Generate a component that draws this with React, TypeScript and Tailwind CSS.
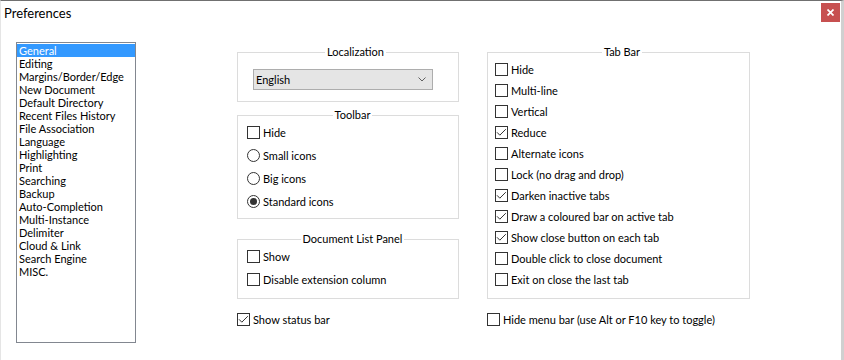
import React from "react";

const pages = [
  "General",
  "Editing",
  "Margins/Border/Edge",
  "New Document",
  "Default Directory",
  "Recent Files History",
  "File Association",
  "Language",
  "Highlighting",
  "Print",
  "Searching",
  "Backup",
  "Auto-Completion",
  "Multi-Instance",
  "Delimiter",
  "Cloud & Link",
  "Search Engine",
  "MISC.",
];

const tabBar: [string, boolean][] = [
  ["Hide", false],
  ["Multi-line", false],
  ["Vertical", false],
  ["Reduce", true],
  ["Alternate icons", false],
  ["Lock (no drag and drop)", false],
  ["Darken inactive tabs", true],
  ["Draw a coloured bar on active tab", true],
  ["Show close button on each tab", true],
  ["Double click to close document", false],
  ["Exit on close the last tab", false],
];

function Box({ checked }: { checked?: boolean }) {
  return (
    <span className="flex h-[13px] w-[13px] shrink-0 items-center justify-center border border-[#333333] bg-white">
      {checked && (
        <svg width="11" height="11" viewBox="0 0 11 11">
          <path d="M1 5.3 L3.8 8.2 L9.8 2.2" fill="none" stroke="#333333" strokeWidth="1" />
        </svg>
      )}
    </span>
  );
}

function Radio({ checked }: { checked?: boolean }) {
  return (
    <span className="flex h-[13px] w-[13px] shrink-0 items-center justify-center rounded-full border border-[#333333] bg-white">
      {checked && <span className="h-[7px] w-[7px] rounded-full bg-[#333333]" />}
    </span>
  );
}

function Row({ label, checked, className }: { label: string; checked?: boolean; className: string }) {
  return (
    <div className={`flex items-center gap-[3px] whitespace-nowrap ${className}`}>
      <Box checked={checked} />
      <span>{label}</span>
    </div>
  );
}

function RadioRow({ label, checked }: { label: string; checked?: boolean }) {
  return (
    <div className="flex h-[23px] items-center gap-[3px]">
      <Radio checked={checked} />
      <span>{label}</span>
    </div>
  );
}

export default function App() {
  return (
    <div className="flex h-[360px] w-[844px] flex-col border-t border-l border-r-[3px] border-t-[#707070] border-l-[#e5e5e5] border-r-[#d0d0d0] bg-white font-['Lato',sans-serif] text-[11px] leading-[13px] text-black">
      {/* Title bar */}
      <div className="flex h-[41px] shrink-0 items-start justify-between">
        <span className="ml-[3px] mt-[3px] text-[13px] leading-[18px]">Preferences</span>
        <button className="mr-[1px] mt-[2px] flex h-[19px] w-[19px] items-center justify-center bg-[#c75050]">
          <svg width="7" height="7" viewBox="0 0 7 7">
            <path d="M0.5 0.5 L6.5 6.5 M6.5 0.5 L0.5 6.5" stroke="white" strokeWidth="1.7" />
          </svg>
        </button>
      </div>

      <div className="flex items-start">
        {/* Page list */}
        <div className="ml-[15px] h-[301px] w-[120px] shrink-0 border border-[#828790] pt-[1px]">
          {pages.map((p, i) => (
            <div key={p} className={i === 0 ? "bg-[#3399ff] pl-[2px] text-white" : "pl-[2px]"}>
              {p}
            </div>
          ))}
        </div>

        {/* Left column */}
        <div className="ml-[101px] mt-[4px] flex w-[222px] shrink-0 flex-col">
          <fieldset className="border border-[#dcdcdc] pb-[11px] pl-[15px] pt-[11px]">
            <legend className="mx-auto px-[2px] leading-[12px]">Localization</legend>
            <div className="flex h-[21px] w-[180px] items-center justify-between border border-[#adadad] bg-[#e5e5e5] pl-[2px] pr-[6px]">
              <span>English</span>
              <svg width="8" height="5" viewBox="0 0 8 5">
                <path d="M0.5 0.5 L4 4 L7.5 0.5" fill="none" stroke="#606060" strokeWidth="1" />
              </svg>
            </div>
          </fieldset>

          <fieldset className="mt-[7px] border border-[#dcdcdc] pb-[5px] pl-[9px]">
            <legend className="mx-auto px-[2px] leading-[12px]">Toolbar</legend>
            <Row label="Hide" className="h-[23px]" />
            <RadioRow label="Small icons" />
            <RadioRow label="Big icons" />
            <RadioRow label="Standard icons" checked />
          </fieldset>

          <fieldset className="mt-[14px] border border-[#dcdcdc] pb-[7px] pl-[9px]">
            <legend className="mx-auto px-[2px] leading-[12px]">Document List Panel</legend>
            <Row label="Show" className="h-[23px]" />
            <Row label="Disable extension column" className="h-[23px]" />
          </fieldset>

          <Row label="Show status bar" checked className="mt-[9px] h-[23px]" />
        </div>

        {/* Right column */}
        <div className="ml-[28px] mt-[4px] flex w-[263px] shrink-0 flex-col">
          <fieldset className="border border-[#dcdcdc] pb-[8px] pl-[7px] pt-[1px]">
            <legend className="mx-auto px-[2px] leading-[12px]">Tab Bar</legend>
            {tabBar.map(([label, checked]) => (
              <Row key={label} label={label} checked={checked} className="h-[21px]" />
            ))}
          </fieldset>

          <Row label="Hide menu bar (use Alt or F10 key to toggle)" className="mt-[9px] h-[23px]" />
        </div>
      </div>
    </div>
  );
}
